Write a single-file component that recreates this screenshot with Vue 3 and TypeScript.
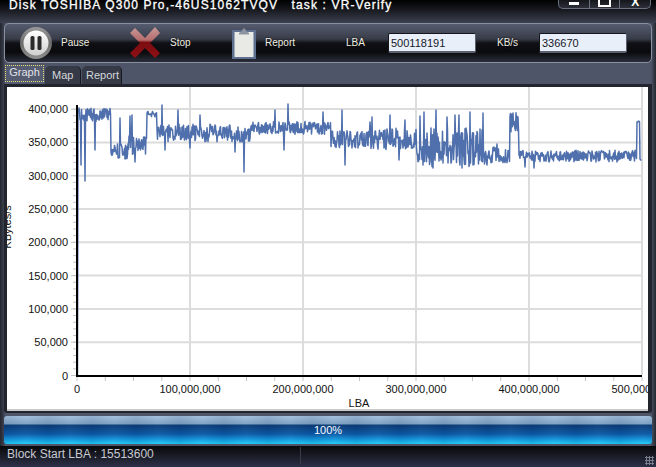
<script setup lang="ts">
type Seg = [number, number, number, number];
const segs: Seg[] = [
  [79, 110, 115, 7],
  [111, 128, 151, 8],
  [129, 146, 146, 10],
  [147, 156, 114, 3],
  [157, 250, 133, 9],
  [251, 330, 128, 7],
  [331, 370, 139, 10],
  [371, 416, 139, 11],
  [417, 484, 148, 20],
  [485, 509, 155, 8],
  [510, 518, 122, 11],
  [519, 636, 156, 6],
  [637, 639, 122, 1],
  [640, 641, 160, 1],
];
const spikes: Record<number, number> = {
  81: 165, 85: 181, 95: 150, 120: 118, 130: 116, 132: 115, 135: 162, 162: 105, 165: 150, 178: 110,
  190: 148, 200: 115, 235: 152, 244: 172, 275: 110, 284: 150, 288: 104, 323: 112, 342: 110,
  345: 165, 370: 122, 372: 117, 390: 115, 399: 160, 405: 120, 420: 116, 423: 165, 431: 128,
  424: 112, 436: 110, 441: 160, 447: 117, 433: 168, 448: 163, 455: 115, 459: 115, 462: 168,
  470: 112, 473: 165, 478: 150, 483: 113, 487: 165, 497: 144, 525: 167, 534: 168,
};
let seed = 17;
const rnd = (): number => {
  seed = (seed * 16807) % 2147483647;
  return seed / 2147483647;
};
const pts: string[] = ['77.5,375', '78,112'];
for (const [a, b, base, amp] of segs) {
  for (let x = a; x <= b; x += 1) {
    const y = spikes[x] ?? base + (rnd() - 0.5) * 2 * amp;
    pts.push(`${x},${y.toFixed(1)}`);
    pts.push(`${x + 0.5},${(base + (rnd() - 0.5) * 1.8 * amp).toFixed(1)}`);
  }
}
const line = pts.join(' ');

const yLabels = [400, 350, 300, 250, 200, 150, 100, 50, 0].map((v) => ({
  y: 375.5 - (v / 50) * 33.3,
  text: v === 0 ? '0' : `${v},000`,
}));
const xLabels = [0, 1, 2, 3, 4, 5].map((i) => ({
  x: 77 + i * 113,
  text: i === 0 ? '0' : `${i}00,000,000`,
}));
const yMinor = Array.from({ length: 41 }, (_, i) => 375.5 - i * 6.66);
const xMinor = Array.from({ length: 23 }, (_, i) => 77 + i * 28.25).filter((x) => x < 648);
</script>

<template>
  <div class="win">
    <header class="title">
      <span class="title-text">Disk TOSHIBA Q300 Pro,-46US1062TVQV &nbsp; task : VR-Verify</span>
      <div class="winbtns">
        <span class="wb"><i class="min"></i></span>
        <span class="wb"><i class="max"></i></span>
        <span class="wb wx">X</span>
      </div>
    </header>

    <section class="toolbar">
      <svg class="ic-pause" width="32" height="32" viewBox="0 0 32 32">
        <defs>
          <linearGradient id="ring" x1="0" y1="0" x2="0" y2="1">
            <stop offset="0" stop-color="#9a9a9a" />
            <stop offset="0.5" stop-color="#6a6a6a" />
            <stop offset="1" stop-color="#8f8f8f" />
          </linearGradient>
          <linearGradient id="face" x1="0" y1="0" x2="0" y2="1">
            <stop offset="0" stop-color="#ffffff" />
            <stop offset="1" stop-color="#cfcfcf" />
          </linearGradient>
        </defs>
        <circle cx="16" cy="16" r="16" fill="url(#ring)" />
        <circle cx="16" cy="16" r="12.5" fill="url(#face)" />
        <rect x="10.5" y="9" width="4" height="14" rx="1.6" fill="#2b2b2b" />
        <rect x="17.5" y="9" width="4" height="14" rx="1.6" fill="#2b2b2b" />
      </svg>
      <span class="lbl l-pause">Pause</span>
      <svg class="ic-stop" width="32" height="32" viewBox="0 0 32 32">
        <defs>
          <linearGradient id="xg" x1="0" y1="0" x2="0" y2="1">
            <stop offset="0" stop-color="#c99a9a" />
            <stop offset="0.42" stop-color="#b76c6c" />
            <stop offset="0.5" stop-color="#7c0c10" />
            <stop offset="1" stop-color="#8e1014" />
          </linearGradient>
        </defs>
        <path d="M1 6 L6 1 L16 11 L26 0 L31 6 L21 16 L31 26 L26 31 L16 21 L6 31 L1 26 L11 16 Z" fill="url(#xg)" />
      </svg>
      <span class="lbl l-stop">Stop</span>
      <svg class="ic-clip" width="24" height="31" viewBox="0 0 24 31">
        <rect x="0" y="2" width="24" height="29" fill="#5f6f90" />
        <rect x="2.5" y="4" width="19" height="25" fill="#e9e9e6" />
        <path d="M7 5 L10 3 L11 0.5 L13 0.5 L14 3 L17 5 L17 6.5 L7 6.5 Z" fill="#8d93a0" />
      </svg>
      <span class="lbl l-report">Report</span>
      <span class="lbl l-lba">LBA</span>
      <span class="field">500118191</span>
      <span class="lbl l-kbs">KB/s</span>
      <span class="field">336670</span>
    </section>

    <nav class="tabs">
      <span class="tab active"><b>Graph</b></span>
      <span class="tab">Map</span>
      <span class="tab">Report</span>
    </nav>

    <section class="frame">
      <svg class="chart" width="641" height="322" viewBox="7 87 641 322">
        <g stroke="#dcdcdc" stroke-width="2">
          <line v-for="l in yLabels.slice(0, -1)" :key="l.y" x1="77" x2="641" :y1="l.y" :y2="l.y" />
          <line v-for="l in xLabels.slice(1)" :key="l.x" :x1="l.x" :x2="l.x" y1="87" y2="375" />
        </g>
        <g stroke="#c4c4c4" stroke-width="1">
          <line v-for="y in yMinor" :key="y" x1="73" x2="76" :y1="y" :y2="y" />
          <line v-for="x in xMinor" :key="x" :x1="x" :x2="x" y1="377" y2="381" />
          <line v-for="l in yLabels" :key="'m' + l.y" x1="71" x2="76" :y1="l.y" :y2="l.y" />
        </g>
        <polyline :points="line" fill="none" stroke="#4f70ad" stroke-width="1.5" stroke-linejoin="round" />
        <rect x="76" y="105" width="2" height="272" fill="#000" />
        <rect x="76" y="375" width="566" height="2" fill="#000" />
        <g class="ct">
          <text v-for="l in yLabels" :key="'t' + l.y" x="68" :y="l.y + 4" text-anchor="end">{{ l.text }}</text>
          <text v-for="l in xLabels" :key="'x' + l.x" :x="l.x" y="393" text-anchor="middle">{{ l.text }}</text>
          <text x="359" y="407" text-anchor="middle">LBA</text>
          <text transform="translate(11 227) rotate(-90)" text-anchor="middle">KBytes/s</text>
        </g>
      </svg>
    </section>

    <section class="progress"><span>100%</span></section>

    <footer class="status">
      <span class="st-left">Block Start LBA : 15513600</span>
      <span class="grip"></span>
    </footer>
  </div>
</template>

<style scoped>
.win {
  width: 656px;
  height: 467px;
  display: flex;
  flex-direction: column;
  overflow: hidden;
  background: linear-gradient(90deg, #23262e 0, #3c4050 4px, #4f5569 5px, #4f5569 651px, #23262e 656px);
  font-family: "Liberation Sans", Arial, sans-serif;
}
.title {
  height: 23px;
  flex: none;
  display: flex;
  justify-content: space-between;
  align-items: flex-start;
  background: linear-gradient(#000 0, #15171c 9px, #3c4150 23px);
}
.title-text {
  margin: -2px 0 0 9px;
  color: #fff;
  font-size: 12px;
  line-height: 14px;
  letter-spacing: 1.13px;
  white-space: pre;
  -webkit-text-stroke: 0.3px #fff;
}
.winbtns {
  display: flex;
  width: 93px;
  height: 9px;
  margin-right: 5px;
  border: 1px solid #6b7080;
  border-top: 0;
  border-radius: 0 0 5px 5px;
  box-sizing: border-box;
  background: linear-gradient(#15171c, #2c2f39);
}
.wb {
  flex: 1;
  position: relative;
  display: flex;
  justify-content: center;
  color: #fff;
  border-right: 1px solid #6b7080;
}
.wb:last-child { border-right: 0; }
.min { width: 10px; height: 3px; background: #fff; margin-top: 2px; }
.max { width: 9px; height: 5px; border: 2px solid #fff; border-top: 0; box-sizing: content-box; margin-top: 0; }
.wx { font-size: 12px; line-height: 5px; font-weight: 700; overflow: hidden; height: 8px; }

.toolbar {
  flex: none;
  height: 40px;
  margin: 0 4px 0 4px;
  box-sizing: border-box;
  display: flex;
  align-items: center;
  border: 1px solid #8a8f9e;
  border-radius: 5px;
  background: linear-gradient(#565c70 0, #383c48 15px, #101116 19px, #0a0a0d 28px, #2e3240 39px);
}
.lbl {
  color: #f0eee0;
  font-size: 10px;
  line-height: 12px;
  text-shadow: 0 0 2px #000;
}
.ic-pause { margin-left: 15px; }
.l-pause { margin-left: 9px; width: 68px; }
.l-stop { margin-left: 9px; width: 62px; }
.ic-clip { margin-top: 1px; }
.l-report { margin-left: 9px; width: 81px; }
.l-lba { width: 42px; }
.l-kbs { margin-left: 21px; width: 42px; }
.field {
  width: 88px;
  height: 20px;
  box-sizing: border-box;
  background: #e9eff8;
  border: 1px solid #14161c;
  border-bottom: 2px solid #5b6070;
  border-right: 1px solid #5b6070;
  border-radius: 2px;
  padding-left: 2px;
  color: #14182a;
  font-size: 11px;
  line-height: 18px;
}
.tabs {
  flex: none;
  height: 21px;
  padding: 2px 0 0 5px;
  box-sizing: border-box;
  display: flex;
  align-items: flex-end;
  gap: 1px;
}
.tab {
  height: 18px;
  padding: 0 4px;
  box-sizing: border-box;
  color: #d4d6dc;
  font-size: 11px;
  line-height: 19px;
  background: #363a46;
  border-radius: 5px 5px 0 0;
  border-right: 1px solid #16181e;
}
.tab:nth-child(2) { width: 36px; padding-left: 7px; }
.tab:nth-child(3) { width: 40px; }
.tab.active {
  width: 39px;
  height: 19px;
  padding: 0;
  background: #555b70;
  border: 0;
}
.tab.active b {
  display: block;
  font-weight: 400;
  height: 15px;
  line-height: 13px;
  text-align: center;
  color: #e0e2e8;
  border: 1px dotted #e8e070;
}
.frame {
  flex: none;
  height: 329px;
  margin: 0 4px;
  padding: 3px 3px 0 3px;
  box-sizing: border-box;
  background: #22252d;
  border-radius: 0 0 3px 3px;
}
.chart {
  display: block;
  background: #fff;
  border-bottom: 2px solid #c9c9c9;
}
.ct text {
  font-family: "Liberation Sans", Arial, sans-serif;
  font-size: 11px;
  fill: #111;
}
.progress {
  flex: none;
  height: 28px;
  margin: 3px 4px 0;
  border-radius: 3px;
  display: flex;
  align-items: center;
  justify-content: center;
  background:
    repeating-linear-gradient(90deg, rgba(0, 20, 60, 0.08) 0, rgba(255, 255, 255, 0.03) 22px, rgba(0, 20, 60, 0.08) 44px),
    linear-gradient(#a2bfdc 0, #7fa1c4 8px, #0b3c74 9px, #0c5aa8 18px, #14a0e4 24px, #22cdf6 28px);
}
.progress span {
  color: #f4f8ff;
  font-size: 11px;
  line-height: 28px;
}
.status {
  flex: 1;
  margin-top: 2px;
  display: flex;
  align-items: center;
  position: relative;
  background: linear-gradient(#08090c 0, #1a1c26 10px, #2d3148 21px);
}
.st-left {
  width: 293px;
  padding-left: 7px;
  margin-top: -3px;
  height: 17px;
  line-height: 15px;
  color: #c8cad2;
  font-size: 12px;
  border-right: 1px solid #3a3d48;
}
.grip {
  position: absolute;
  right: 2px;
  bottom: 2px;
  width: 9px;
  height: 9px;
  background: radial-gradient(circle, #7a7e8c 1px, transparent 1.2px) 0 0 / 3px 3px;
}
</style>
